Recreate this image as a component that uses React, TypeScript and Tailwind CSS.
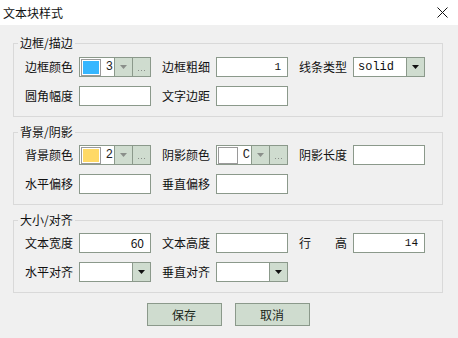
import React from 'react';

const font = { fontFamily: '"Noto Sans CJK SC", "Noto Sans", sans-serif' };

function Arrow({ gray }: { gray?: boolean }) {
    return (
        <svg width="7" height="4" viewBox="0 0 7 4">
            <polygon points="0,0 7,0 3.5,4" fill={gray ? '#8a8f8a' : '#111'} />
        </svg>
    );
}

function Label({ text }: { text: string }) {
    return <div className="w-[54px] shrink-0 text-[12px] leading-[20px] text-[#111]">{text}</div>;
}

function TextBox({ value, mono }: { value?: string; mono?: boolean }) {
    return (
        <div
            className={`w-[72px] h-[20px] shrink-0 bg-white border border-[#8b998b] leading-[18px] text-right pr-[6px] text-[#111] ${mono ? 'font-["Liberation_Mono",monospace] text-[11px]' : 'text-[12px]'}`}
        >
            {value}
        </div>
    );
}

function Select({ value }: { value?: string }) {
    return (
        <div className="w-[72px] h-[20px] shrink-0 bg-white border border-[#8b998b] flex">
            <div className="flex-1 pl-[4px] text-[12px] leading-[18px] text-[#111] font-['Liberation_Mono',monospace]">{value}</div>
            <div className="w-[18px] shrink-0 border-l border-[#8b998b] bg-[#cfdccf] flex items-center justify-center">
                <Arrow />
            </div>
        </div>
    );
}

function ColorPicker({ color, hint }: { color: string; hint: string }) {
    return (
        <div className="w-[72px] h-[20px] shrink-0 bg-white border border-[#8b998b] flex">
            <div className="shrink-0 pl-[1px] pt-[1px]">
                <div className="w-[20px] h-[17px] border border-[#9a9a9a] bg-white p-[1px]">
                    <div className="w-full h-full" style={{ background: color }} />
                </div>
            </div>
            <div className="flex-1 min-w-0 overflow-hidden text-[12px] leading-[18px] text-right pr-[1px] font-['Liberation_Mono',monospace] text-[#222]">{hint}</div>
            <div className="w-[18px] shrink-0 border-l border-[#8b998b] bg-[#cfdccf] flex items-center justify-center">
                <Arrow gray />
            </div>
            <div className="w-[18px] shrink-0 border-l border-[#8b998b] bg-[#cfdccf] flex items-end justify-center pb-[5px]">
                <svg width="8" height="1" viewBox="0 0 8 1">
                    <rect x="0" y="0" width="1" height="1" fill="#8a8f8a" />
                    <rect x="3" y="0" width="1" height="1" fill="#8a8f8a" />
                    <rect x="6" y="0" width="1" height="1" fill="#8a8f8a" />
                </svg>
            </div>
        </div>
    );
}

function Group({ title, className, children }: { title: string; className?: string; children: React.ReactNode }) {
    return (
        <fieldset className={`ml-[13px] w-[430px] border border-[#d9d9d9] px-[11px] pb-[10px] ${className ?? ''}`}>
            <legend className="ml-[-7px] px-[2px] text-[12px] leading-[16px] text-[#111]">{title}</legend>
            <div className="flex flex-col gap-[9px]">{children}</div>
        </fieldset>
    );
}

function Row({ children }: { children: React.ReactNode }) {
    return <div className="flex items-center h-[20px]">{children}</div>;
}

export default function App() {
    return (
        <div className="w-[458px] h-[338px] bg-[#f0f0f0] overflow-hidden" style={font}>
            {/* title bar */}
            <div className="h-[25px] bg-white flex items-center justify-between">
                <span className="pl-[3px] text-[12px] text-[#111]">文本块样式</span>
                <svg width="11" height="11" viewBox="0 0 11 11" className="mr-[10px]">
                    <path d="M0.5 0.5 L10.5 10.5 M10.5 0.5 L0.5 10.5" stroke="#111" strokeWidth="1" />
                </svg>
            </div>

            <div className="pt-[10px]">
                <Group title="边框/描边" className="pt-[6px]">
                    <Row>
                        <Label text="边框颜色" />
                        <ColorPicker color="#35b6ff" hint="3" />
                        <div className="w-[11px]" />
                        <Label text="边框粗细" />
                        <TextBox value="1" mono />
                        <div className="w-[11px]" />
                        <Label text="线条类型" />
                        <Select value="solid" />
                    </Row>
                    <Row>
                        <Label text="圆角幅度" />
                        <TextBox />
                        <div className="w-[11px]" />
                        <Label text="文字边距" />
                        <TextBox />
                    </Row>
                </Group>

                <Group title="背景/阴影" className="mt-[7px] pt-[5px]">
                    <Row>
                        <Label text="背景颜色" />
                        <ColorPicker color="#ffd966" hint="2" />
                        <div className="w-[11px]" />
                        <Label text="阴影颜色" />
                        <ColorPicker color="#ffffff" hint="C" />
                        <div className="w-[11px]" />
                        <Label text="阴影长度" />
                        <TextBox />
                    </Row>
                    <Row>
                        <Label text="水平偏移" />
                        <TextBox />
                        <div className="w-[11px]" />
                        <Label text="垂直偏移" />
                        <TextBox />
                    </Row>
                </Group>

                <Group title="大小/对齐" className="mt-[7px] pt-[5px]">
                    <Row>
                        <Label text="文本宽度" />
                        <TextBox value="60" />
                        <div className="w-[11px]" />
                        <Label text="文本高度" />
                        <TextBox />
                        <div className="w-[11px]" />
                        <div className="w-[54px] shrink-0">
                            <div className="w-[48px] flex justify-between text-[12px] leading-[20px] text-[#111]">
                                <span>行</span>
                                <span>高</span>
                            </div>
                        </div>
                        <TextBox value="14" mono />
                    </Row>
                    <Row>
                        <Label text="水平对齐" />
                        <Select />
                        <div className="w-[11px]" />
                        <Label text="垂直对齐" />
                        <Select />
                    </Row>
                </Group>

                <div className="mt-[10px] flex justify-center gap-[13px] pr-[2px]">
                    <button className="w-[75px] h-[23px] bg-[#cfdccf] border border-[#8b998b] text-[12px] text-[#1a261a]">保存</button>
                    <button className="w-[75px] h-[23px] bg-[#cfdccf] border border-[#8b998b] text-[12px] text-[#1a261a]">取消</button>
                </div>
            </div>
        </div>
    );
}
